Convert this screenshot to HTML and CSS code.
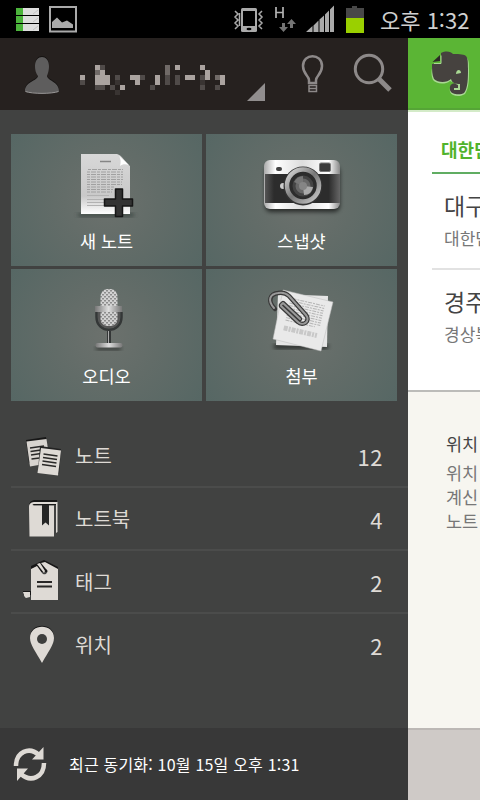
FILE: index.html
```html
<!DOCTYPE html>
<html lang="ko">
<head>
<meta charset="utf-8">
<title>Evernote</title>
<link rel="stylesheet" href="styles.css">
</head>
<body>
<div class="phone">
  <header class="status">
    <svg class="notices" width="64" height="28" viewBox="15 6 64 28">
      <g fill="#dedede"><path d="M16 8h23v7H16zM16 16h23v7H16zM16 24h23v7H16z"/></g>
      <path fill="#4cb43c" d="M16 8h7v7h-7zM16 16h7v7h-7zM16 24h7v7h-7z"/>
      <path d="M33 14l5-4M33 22l5-4M33 30l5-4" stroke="#c4c4c4"/>
      <rect x="50" y="7" width="26" height="24.500" fill="none" stroke="#aaa" stroke-width="2"/>
      <path fill="#aaa" d="M52 28v-6l5-4.500 5 5 5-2 6 4v3.500z"/>
    </svg>
    <svg width="136" height="34" viewBox="232 2 136 34">
      <g fill="none" stroke="#aaa" stroke-width="1.500"><path d="M235 11l3 3-3 3 3 3-3 3 3 3-3 3M239.500 13v13M262 11l-3 3 3 3-3 3 3 3-3 3 3 3"/></g>
      <rect x="241" y="8" width="16" height="24" rx="1.500" fill="#aaa"/><path d="M243 11h12v15h-12z"/><ellipse cx="249" cy="29" rx="2.500" ry="1.200"/>
      <path d="M276 7v11M283 7v11M276 12.500h7" stroke="#b3b3b3" stroke-width="1.700"/>
      <path fill="#747474" d="M282 23h3v4h3l-4.500 5-4.500-5h3zM290 28v-4h-3l4.500-5 4.500 5h-3v4z"/>
      <path fill="#aaa" d="M306 32l6.500-6v6zM313.500 25.500l5-5V32h-5zM319.500 19.500l4.500-4V32h-4.500zM325 14.500l4-4V32h-4zM330 9.500l4-4V32h-4z"/>
      <path fill="#484848" d="M352 6h5v2h7v10h-18V8h6z"/><path fill="#9ad000" d="M346 18h18v15h-18z"/>
    </svg>
    <time class="clock">오후 1:32</time>
  </header>

  <div class="body">
    <aside class="drawer">
      <div class="account">
        <svg class="person" width="36" height="40" viewBox="24 55 36 40">
          <path fill="#151312" d="M35 65c0-12 14-12 14 0 0 5-1 7-2 10 1 5 12 6 12 15 0 3-34 3-34 0 0-9 12-10 13-15-2-3-3-5-3-10z"/>
          <path fill="#5e5d5d" d="M35 66c0-12 14-12 14 0 0 5-1 7-2 10 1 5 12 6 12 15 0 3-34 3-34 0 0-9 12-10 13-15-2-3-3-5-3-10z"/>
          <path d="M25.500 91.500c7 2.500 26 2.500 33 0" fill="none" stroke="#989696"/>
        </svg>
        <svg class="name" width="145" height="30" viewBox="80 65 145 30" shape-rendering="crispEdges">
          <path fill="#aaa39f" d="M80 75h5v5h-5zM95 65h5v5h-5zM100 70h5v5h-5zM95 75h15v10H95zM120 85h5v5h-5zM130 75h10v10h-5v-5h-5zM155 75h5v10h-5zM175 65h5v5h-5zM185 75h10v5h-10zM200 65h5v5h-5zM205 70h5v10h-5zM220 75h5v10h-5z"/>
          <path fill="#706a67" d="M95 70h5v5h-5zM165 65h5v10h-5zM215 75h5v5h-5z"/>
          <path fill="#504b49" d="M80 80h5v5h-5zM100 65h5v5h-5zM95 85h10v5H95zM110 85h5v5h-5zM115 75h5v5h-5zM140 75h5v5h-5zM150 85h5v5h-5zM165 75h5v10h-5zM175 75h5v10h-5zM200 75h5v5h-5zM200 85h5v5h-5zM215 85h5v5h-5z"/>
          <path fill="#393432" d="M115 80h5v5h-5zM115 90h5v5h-5zM200 80h5v5h-5z"/>
        </svg>
        <svg width="164" height="54" viewBox="244 50 164 54" fill="none" stroke="#8d8989">
          <path fill="#918e8e" stroke="none" d="M265 83v18h-18z"/>
          <path stroke-width="2.500" d="M309 83v-3c0-4-6-6-6-14 0-13 19-13 19 0 0 8-6 10-6 14v3z"/>
          <path stroke-width="1.500" d="M309 85.500h7.500v6H309zM309 88.500h8"/>
          <circle cx="369" cy="69" r="13.700" stroke-width="3"/><path stroke-width="5" d="M379 79l11 11"/>
        </svg>
      </div>

      <nav class="tiles">
        <div class="tile">
          <svg width="191" height="132" viewBox="11 134 191 132">
            <defs>
              <linearGradient id="paper" x2="0" y2="1"><stop stop-color="#d8d8d8"/><stop offset=".7" stop-color="#c9c9c9"/><stop offset="1" stop-color="#fff"/></linearGradient>
              <filter id="soft"><feGaussianBlur stdDeviation="2"/></filter>
            </defs>
            <path d="M78 213h56v4H78z" fill="#26302d" opacity=".6" filter="url(#soft)"/>
            <path fill="url(#paper)" d="M81 154h36c5 1 8 8 13 12v48H81z"/>
            <path fill="#fff" d="M119 156l10 9c-3-1-7-1-9 1 1-4 1-7-1-10z"/>
            <path stroke="#858585" stroke-width="1.500" d="M100 161.500h11"/>
            <path stroke="#a0a0a0" stroke-dasharray="3 1 5 1" d="M88 169.500h35M87 172h36M87 174.500h36M87 177h36M87 179.500h36M87 182h35M87 184.500h35M87 187h27M87 189.500h26M87 192h25"/>
            <path stroke="#b2b2b2" d="M87 195.500h22M87 199.500h18M87 202.500h19M87 205.500h21"/>
            <path fill="#333" stroke="#161616" stroke-width="1.500" stroke-linejoin="round" d="M115.500 189h7v10h10v7h-10v10.500h-7V206h-11v-7h11z"/>
          </svg>
          <span class="label">새 노트</span>
        </div>
        <div class="tile">
          <svg width="191" height="132" viewBox="206 134 191 132">
            <defs>
              <linearGradient id="silver"><stop stop-color="#aaa"/><stop offset=".15" stop-color="#fff"/><stop offset=".5" stop-color="#ddd"/><stop offset=".85" stop-color="#fff"/><stop offset="1" stop-color="#888"/></linearGradient>
              <linearGradient id="leather"><stop stop-color="#555"/><stop offset=".12" stop-color="#2c2c2c"/><stop offset=".85" stop-color="#2c2c2c"/><stop offset="1" stop-color="#666"/></linearGradient>
              <linearGradient id="ring" x2="1" y2="1"><stop stop-color="#ddd"/><stop offset=".5" stop-color="#777"/><stop offset="1" stop-color="#ccc"/></linearGradient>
            </defs>
            <rect x="265" y="166" width="75" height="46" rx="6" opacity=".6" filter="url(#soft)"/>
            <rect x="264" y="160" width="76" height="49" rx="6" fill="url(#silver)"/>
            <path fill="url(#leather)" d="M265 174h75v29h-75z"/>
            <rect x="276" y="167" width="6" height="4" rx="2" fill="#444"/>
            <rect x="319.500" y="163" width="11" height="8.500" rx="1.500" fill="#3a3a3a" stroke="#777"/>
            <circle cx="283" cy="186" r="3" fill="#ccc"/>
            <circle cx="303" cy="186" r="19.500" fill="#333"/>
            <circle cx="303" cy="185.500" r="16" fill="#2c2c2c" stroke="url(#ring)" stroke-width="4.500"/>
            <circle cx="303" cy="186" r="9" fill="#686868" stroke="#444" stroke-width="3"/>
            <path fill="#aaa" d="M303 186l10 1c-1 5-4 8-9 8z"/><path fill="#777" d="M303 186l-9-4c2-4 5-6 9-6z"/>
            <circle cx="303" cy="186" r="4" fill="#858585"/>
          </svg>
          <span class="label">스냅샷</span>
        </div>
        <div class="tile">
          <svg width="191" height="132" viewBox="11 269 191 132">
            <defs>
              <pattern id="mesh" width="4" height="4" patternUnits="userSpaceOnUse"><path fill="#d2d2d2" d="M0 0h4v4H0z"/><path fill="#8c8c8c" d="M0 0h2v1.500H0zM2 2h2v1.500H2z"/></pattern>
              <linearGradient id="steel"><stop stop-color="#777"/><stop offset=".5" stop-color="#ddd"/><stop offset="1" stop-color="#777"/></linearGradient>
            </defs>
            <path d="M96 347h25v3H96z" opacity=".6" filter="url(#soft)"/>
            <path fill="#555" d="M98 312h22v6c0 14-22 14-22 0z"/>
            <rect x="100.500" y="289" width="17" height="37" rx="7" fill="url(#mesh)"/>
            <path fill="none" stroke="#343737" stroke-width="2.500" d="M96.500 312v5c0 17 25 17 25 0v-5"/>
            <rect x="95" y="306" width="27" height="6" fill="#aaa"/><rect x="95" y="306" width="27" height="6" fill="url(#steel)"/>
            <path fill="none" stroke="#343737" stroke-width="4" d="M109 331v13"/><path stroke="#aaa" d="M108.500 331v13"/>
            <rect x="95.500" y="343" width="27" height="4.500" rx="2" fill="url(#steel)"/>
          </svg>
          <span class="label">오디오</span>
        </div>
        <div class="tile">
          <svg width="191" height="132" viewBox="206 269 191 132">
            <path d="M274 344h54v5h-54z" opacity=".6" filter="url(#soft)"/>
            <path fill="#e5e5e5" d="M278 294l50 2-1 51-51-2z"/>
            <path fill="#e9e9e9" stroke="#bbb" stroke-width=".5" d="M283 290l50 12-12 49-48-12z"/>
            <g transform="rotate(13 303 320)" stroke="#b4b4b4" stroke-dasharray="4 1 2 1"><path d="M288 301.500h33M287 304h34M286 306.500h35M286 309h35M286 311.500h35M286 314h35M286 316.500h35M286 319h35M286 321.500h35M286 324h30"/><path stroke="#c8c8c8" stroke-width="5" d="M286 332h34"/></g>
            <path fill="none" stroke="#393939" stroke-width="4.500" stroke-linecap="round" stroke-linejoin="round" d="M275 309c-8-8-5-15 3-16 5-1 8 0 11 3l17 19c5 6-3 12-8 7l-17-16M281 305l2-2 17 16"/>
            <path fill="none" stroke="#999" stroke-width="2" stroke-linecap="round" stroke-linejoin="round" d="M274 308c-7-8-4-14 4-15 5-1 8 0 11 3l17 19c5 6-3 12-8 7l-17-16M281 305l2-2 17 16"/>
          </svg>
          <span class="label">첨부</span>
        </div>
      </nav>

      <ul class="list">
        <li>
          <svg width="44" height="44" viewBox="22 434 44 44">
            <path fill="#171717" d="M26 440l20-3 3 22-20 4z"/><path fill="#d8d4cf" d="M26.500 441.500l20-2.500 3.500 24-20 3.500z"/><path stroke="#292827" stroke-width="1.500" d="M30 448l14-2M30.500 451.500l14-2M31 455l10-1.500M31.500 459l8-1"/>
            <path fill="#222" d="M40 446l21 3-2 25-21-3z"/><path fill="#dedad5" d="M41 448l20 2.500-3 25-20.500-2.500z"/>
            <path stroke="#292827" stroke-width="1.500" d="M43.500 454l14 2M43 457.500l14 2M42.500 461l14 2M42 464.500l14 2"/>
          </svg>
          <span>노트</span><b>12</b>
        </li>
        <li>
          <svg width="44" height="44" viewBox="22 497 44 44">
            <path fill="#171717" d="M29 507c0-6 3-7 7-7h21v5H29z"/>
            <path fill="#dedad5" d="M29 507c0-4 3-5 6-5h22.500v30l-1.500 1v-29H35c-3 0-3 1.500-1 1.500h8v20l3.500-3 3.500 3v-20h5v31H29.500z"/>
            <path fill="#252525" d="M42 505h7v20l-3.500-3-3.500 3z"/>
          </svg>
          <span>노트북</span><b>4</b>
        </li>
        <li>
          <svg width="44" height="44" viewBox="22 560 44 44">
            <path fill="#171717" d="M31 572v-6l13-6 14 7v5zM23 591h8v4h-8z"/>
            <path fill="#dedad5" d="M31 569l6-3 5 7c3 4 8-2 4-4l-5-6 4-1 13 7v31H31zM23 592h7v5l-4 1c-2-1-2-3-3-6z"/>
            <path fill="#dedad5" d="M37 564l3-1 5 8-1 2z"/>
            <path stroke="#292827" stroke-width="1.800" d="M37 582h15M37 586.500h15"/>
          </svg>
          <span>태그</span><b>2</b>
        </li>
        <li>
          <svg width="44" height="44" viewBox="22 623 44 44">
            <path fill="#171717" d="M30 637c0-15 24-15 24 0 0 7-6 14-12 24-6-10-12-17-12-24z"/>
            <path fill="#dedad5" d="M30 638c0-15 24-15 24 0 0 7-6 14-12 25-6-11-12-18-12-25z"/>
            <circle cx="42" cy="639" r="5" fill="#3d3e3d"/>
          </svg>
          <span>위치</span><b>2</b>
        </li>
      </ul>

      <footer class="sync">
        <svg width="36" height="36" viewBox="12 746 36 36">
          <path fill="none" stroke="#dedad5" stroke-width="4.500" d="M16 766c0-14 13-20 23-11M44 763c0 14-13 20-23 11"/>
          <path fill="#dedad5" d="M43.500 747v12.500H32zM17 781v-12.500h11z"/>
        </svg>
        <span>최근 동기화: 10월 15일 오후 1:31</span>
      </footer>
    </aside>

    <main class="page">
      <div class="brand">
        <svg width="42" height="48" viewBox="430 50 42 48">
          <path fill="#a9d993" d="M433 65l8-2v-9c6-3 10-1 12 1 16 1 16 2 16 15 0 9 0 18-4 24-4 3-13 3-15-2-1-6 2-9 7-8l-7-3c-5 4-14 3-17-1-2-5-2-9 0-15z"/>
          <path fill="#46423f" d="M432 64l9-1v-10c6-3 10-1 12 1 15 0 15 1 15 15 0 9 0 19-4 24-3 2-13 2-14-3-1-7 4-8 8-5v3h-4v2h6v-6c-5 0-8-1-9-5-4 4-13 4-17 0-2-4-2-9-2-15z"/>
          <path fill="#2c2926" d="M432.500 62l7.500-7v6z"/><path fill="none" stroke="#a9d993" d="M434 63.500h7v-8"/><path fill="#a9d993" d="M456 74c0-5 5-5 5-1z"/>
        </svg>
      </div>
      <section class="trip">
        <h2>대한민</h2>
        <article><h3>대구</h3><p>대한민</p></article>
        <article><h3>경주</h3><p>경상북</p></article>
      </section>
      <section class="info">
        <h4>위치</h4>
        <p>위치<br>계신<br>노트</p>
      </section>
      <div class="bottom"></div>
    </main>
  </div>
</div>
</body>
</html>
```

FILE: styles.css
```css
* { box-sizing: border-box; }
body { margin: 0; font-family: "Noto Sans CJK KR", sans-serif; background: #000; }
h2, h3, h4, p, ul { margin: 0; padding: 0; font-weight: 400; }
svg { display: block; flex: none; }
.phone { width: 480px; height: 800px; display: flex; flex-direction: column; overflow: hidden; }
.status { height: 38px; display: flex; align-items: center; padding-left: 15px; background: #000; }
.notices { margin: 2px 153px 0 0; }
.clock { margin-left: 12px; color: #d0d0d0; font-size: 22px; line-height: 38px; white-space: nowrap; }
.body { display: flex; height: 762px; }
.drawer { width: 408px; display: flex; flex-direction: column; background: #414241; }
.account { height: 72px; display: flex; align-items: center; padding-left: 24px; background: #26211f; }
.person { margin-top: 2px; }
.name { margin: 12px 19px 0 20px; }
.account svg:last-child { margin-top: 6px; }
.tiles { display: grid; grid-template-columns: 191px 191px; grid-template-rows: 132px 132px; gap: 3px 4px; padding: 24px 0 24px 11px; }
.tile { display: grid; background: radial-gradient(circle at 50% 50%, #6c716d 0%, #626c68 45%, #566764 100%); }
.tile > * { grid-area: 1 / 1; }
.label { align-self: end; justify-self: center; margin-bottom: 12px; color: #fff; font-size: 17.5px; line-height: 26px; }
.list { list-style: none; height: 303px; padding-left: 11px; }
.list li { height: 63px; display: flex; align-items: center; padding: 0 25px 0 11px; border-bottom: 2px solid #4b4c4b; color: #dedad5; font-size: 20px; }
.list li:last-child { border-bottom: 0; height: 61px; }
.list span { margin-left: 9px; }
.list b { margin-left: auto; font-weight: 400; font-size: 22px; letter-spacing: .5px; }
.sync { height: 72px; display: flex; align-items: center; gap: 21px; padding-left: 12px; background: #383838; color: #fff; font-size: 16px; letter-spacing: .2px; white-space: nowrap; }
.page { width: 72px; overflow: hidden; white-space: nowrap; background: #fff; }
.brand { height: 72px; padding: 12px 0 0 22px; background: #5bb535; border-bottom: 2px solid #55a536; }
.trip { height: 282px; padding-left: 24px; border-bottom: 2px solid #bcbcb9; box-shadow: inset 0 2px #d4ebc8; }
.trip h2 { height: 64px; padding: 22px 0 0 9px; border-bottom: 2px solid #60ad62; color: #51b32c; font-size: 18px; line-height: 34px; font-weight: 700; }
.trip article { height: 96px; padding: 13px 0 0 12px; border-bottom: 2px solid #e2e2e2; }
.trip article:last-child { border-bottom: 0; }
.trip h3 { color: #444; font-size: 23px; line-height: 36px; }
.trip p { color: #777; font-size: 17px; line-height: 30px; }
.info { height: 336px; padding: 40px 0 0 38px; background: #f7f6f0; }
.info h4 { color: #444; font-size: 17.5px; line-height: 24px; }
.info p { padding-top: 5px; color: #777; font-size: 17.5px; line-height: 24px; }
.bottom { height: 72px; border-top: 2px solid #bcb8b5; background: #cfcac7; }
```
